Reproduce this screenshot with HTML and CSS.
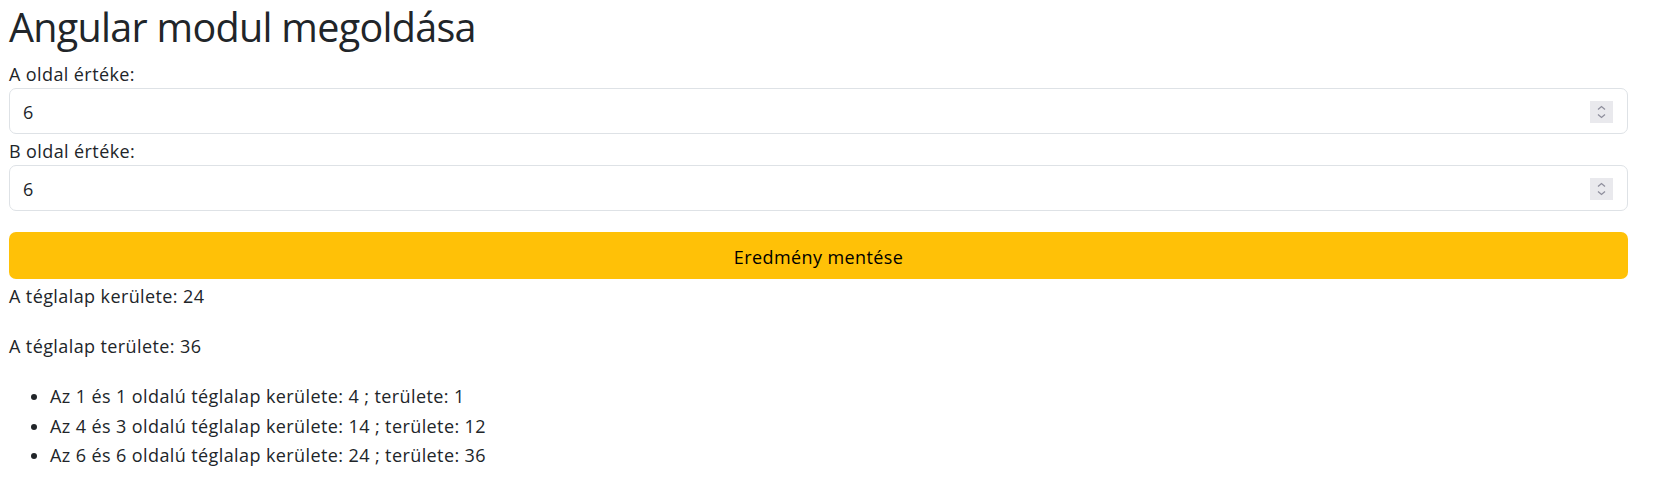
FILE: index.html
```html
<!DOCTYPE html>
<html lang="hu">
<head>
<meta charset="utf-8">
<title>Angular modul megoldása</title>
<link rel="stylesheet" href="styles.css">
</head>
<body>
<div class="page">
  <h1 class="title">Angular modul megoldása</h1>
  <form class="calc">
    <label class="field-label" for="side-a">A oldal értéke:</label>
    <div class="num-field">
      <input id="side-a" class="num-input" type="number" value="6">
      <span class="spinner" aria-hidden="true">
        <svg width="23" height="22" viewBox="0 0 23 22"><rect width="23" height="22" fill="#e9e9ed"/><path d="M8 8.5 L11.5 5.5 L15 8.5" fill="none" stroke="#8f8f9d" stroke-width="1.3"/><path d="M8 13.5 L11.5 16.5 L15 13.5" fill="none" stroke="#8f8f9d" stroke-width="1.3"/></svg>
      </span>
    </div>
    <label class="field-label second" for="side-b">B oldal értéke:</label>
    <div class="num-field">
      <input id="side-b" class="num-input" type="number" value="6">
      <span class="spinner" aria-hidden="true">
        <svg width="23" height="22" viewBox="0 0 23 22"><rect width="23" height="22" fill="#e9e9ed"/><path d="M8 8.5 L11.5 5.5 L15 8.5" fill="none" stroke="#8f8f9d" stroke-width="1.3"/><path d="M8 13.5 L11.5 16.5 L15 13.5" fill="none" stroke="#8f8f9d" stroke-width="1.3"/></svg>
      </span>
    </div>
    <button type="button" class="btn-save">Eredmény mentése</button>
  </form>
  <p class="result">A téglalap kerülete: 24</p>
  <p class="result">A téglalap területe: 36</p>
  <ul class="history">
    <li>Az 1 és 1 oldalú téglalap kerülete: 4 ; területe: 1</li>
    <li>Az 4 és 3 oldalú téglalap kerülete: 14 ; területe: 12</li>
    <li>Az 6 és 6 oldalú téglalap kerülete: 24 ; területe: 36</li>
  </ul>
</div>
</body>
</html>
```
FILE: styles.css
```css
* { box-sizing: border-box; }

body {
  margin: 0;
  background: #fff;
  color: #212529;
  font-family: "Open Sans", "Noto Sans", sans-serif;
  font-size: 18px;
  letter-spacing: 0.4px;
  line-height: 24px;
}

.page {
  padding: 4px 26px 0 9px;
}

.title {
  margin: 0 0 11px;
  font-size: 39.5px;
  font-weight: 400;
  line-height: 47px;
  letter-spacing: -0.7px;
}

.calc {
  display: flex;
  flex-direction: column;
}

.field-label {
  display: block;
  margin-bottom: 2px;
}

.field-label.second {
  margin-top: 5px;
}

.num-field {
  position: relative;
  height: 46px;
}

.num-input {
  width: 100%;
  height: 46px;
  margin: 0;
  padding: 2px 50px 0 13px;
  border: 1px solid #dee2e6;
  border-radius: 7px;
  background: #fff;
  color: #212529;
  font: inherit;
  letter-spacing: inherit;
  -moz-appearance: textfield;
  appearance: textfield;
  outline: none;
}

.num-input::-webkit-inner-spin-button,
.num-input::-webkit-outer-spin-button {
  -webkit-appearance: none;
  margin: 0;
}

.spinner {
  position: absolute;
  top: 13px;
  right: 15px;
  width: 23px;
  height: 22px;
  display: block;
}

.spinner svg { display: block; }

.btn-save {
  margin-top: 21px;
  height: 47px;
  width: 100%;
  padding: 3px 12px 0;
  border: 0;
  border-radius: 7px;
  background: #ffc107;
  color: #000;
  font: inherit;
  letter-spacing: inherit;
  cursor: pointer;
}

.result {
  margin: 5px 0 26px;
}

.result + .result {
  margin-top: 0;
}

.history {
  margin: 0;
  padding-left: 41px;
}

.history li {
  margin-bottom: 5.5px;
}
```
